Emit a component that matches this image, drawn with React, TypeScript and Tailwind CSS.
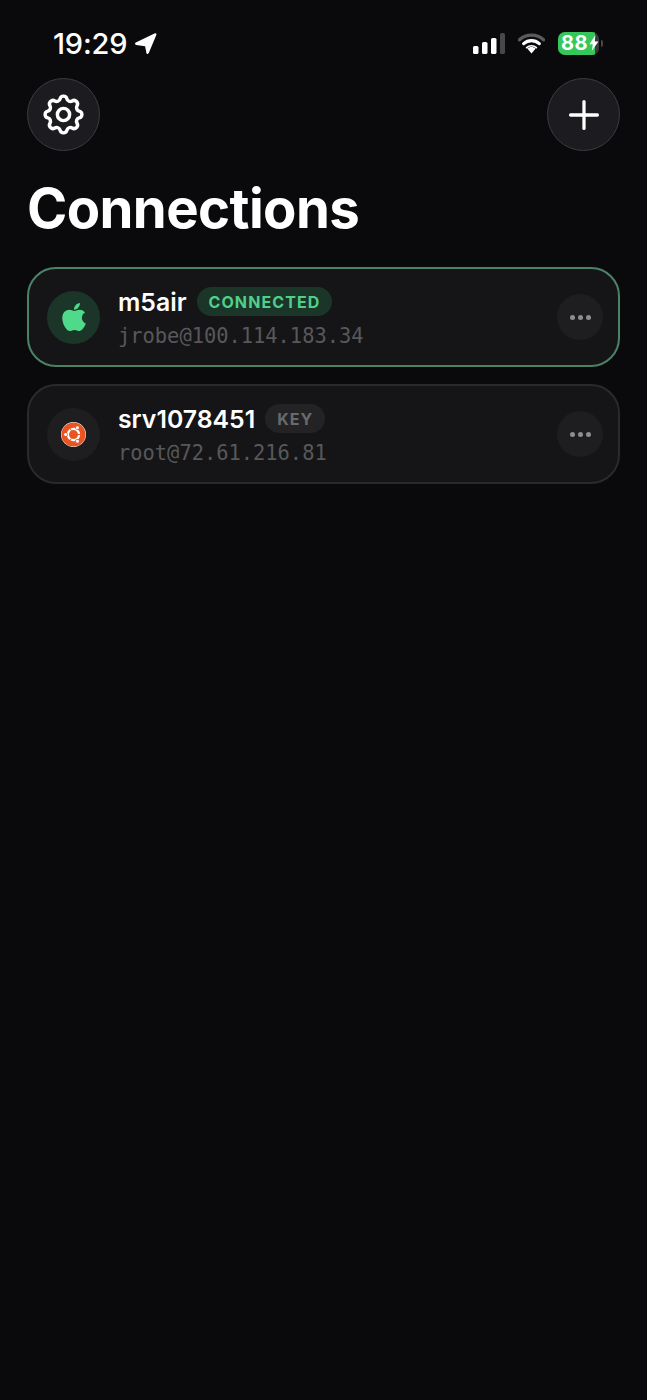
import { Plus } from "lucide-react";
import { FaApple, FaUbuntu } from "react-icons/fa";
import { HiOutlineCog } from "react-icons/hi";

const Dots = () => (
  <div className="flex h-[46px] w-[46px] shrink-0 items-center justify-center gap-[3px] rounded-full bg-[#1e1e20]">
    <span className="h-[5px] w-[5px] rounded-full bg-[#8e8e90]" />
    <span className="h-[5px] w-[5px] rounded-full bg-[#8e8e90]" />
    <span className="h-[5px] w-[5px] rounded-full bg-[#8e8e90]" />
  </div>
);

const StatusBar = () => (
  <div className="flex h-[78px] items-center justify-between pb-[8px] pl-[53px] pr-[44px] pt-[16px]">
    <div className="flex items-center gap-[7px]">
      <span className="text-[29px] font-medium leading-none tracking-[-0.2px] text-white">19:29</span>
      <svg width="23" height="23" viewBox="0 0 23 22" fill="white">
        <path d="M21 .8c1-.4 1.8.5 1.4 1.5L14.8 20.6c-.5 1.2-2.2 1-2.4-.2l-1.3-6.6-8.9-1.4c-1.3-.2-1.6-2-.4-2.5z" />
      </svg>
    </div>
    <div className="flex items-center">
      {/* signal */}
      <svg width="32" height="21" viewBox="0 0 32 21" className="mr-[13px]">
        <rect x="0" y="13" width="5.5" height="8" rx="1.6" fill="white" />
        <rect x="9" y="9" width="5.5" height="12" rx="1.6" fill="white" />
        <rect x="18" y="5" width="5.5" height="16" rx="1.6" fill="white" />
        <rect x="27" y="0" width="5" height="21" rx="1.6" fill="#48484a" />
      </svg>
      {/* wifi */}
      <svg width="27" height="21" viewBox="0 0 27 21" className="mr-[13px]" fill="none">
        <path d="M1.5 6.8C8.3.6 18.7.6 25.5 6.8" stroke="#5a5a5c" strokeWidth="3.4" strokeLinecap="round" />
        <path d="M5.7 10.6c4.5-4 11.1-4 15.6 0" stroke="white" strokeWidth="3.2" strokeLinecap="round" />
        <path d="M13.5 20.5 9.3 15.4c2.4-2 6-2 8.4 0z" fill="white" />
        <path d="M8.6 14.6c2.8-2.5 7-2.5 9.8 0" stroke="white" strokeWidth="1.6" strokeLinecap="round" />
      </svg>
      {/* battery */}
      <div className="flex h-[23px] w-[41px] items-center overflow-hidden rounded-[7px] bg-[#3a3a3c]">
        <div className="flex h-full w-[37px] items-center justify-start bg-[#35c759] pl-[3px]">
          <span className="text-[20px] font-bold leading-none tracking-[0.4px] text-white">88</span>
          <svg width="10" height="16" viewBox="0 0 10 16" fill="white" className="ml-[1px] shrink-0">
            <path d="M6.4 0 0.4 9.2h3.4L2.8 16 9.4 6.4H5.8z" />
          </svg>
        </div>
      </div>
      <div className="ml-[2px] h-[7px] w-[2px] rounded-r-full bg-[#48484a]" />
    </div>
  </div>
);

const CircleButton = ({ children }: { children: React.ReactNode }) => (
  <button className="flex h-[73px] w-[73px] items-center justify-center rounded-full border border-[#3c3c40] bg-[#1c1c20] text-white">
    {children}
  </button>
);

type CardProps = {
  name: string;
  host: string;
  badge: string;
  connected?: boolean;
};

const ConnectionCard = ({ name, host, badge, connected }: CardProps) => (
  <div
    className={
      connected
        ? "flex h-[100px] items-center rounded-[29px] border-2 border-[#4a8367] bg-[#151517] pl-[18px] pr-[15px]"
        : "flex h-[100px] items-center rounded-[29px] border-2 border-[#2a2a2d] bg-[#151517] pl-[18px] pr-[15px]"
    }
  >
    {connected ? (
      <div className="flex h-[53px] w-[53px] shrink-0 items-center justify-center rounded-full bg-[#1c3529]">
        <FaApple className="text-[32px] text-[#4fd98a]" />
      </div>
    ) : (
      <div className="flex h-[53px] w-[53px] shrink-0 items-center justify-center rounded-full bg-[#1e1e20]">
        <span className="rounded-full bg-white">
          <FaUbuntu className="block text-[25px] text-[#e95420]" />
        </span>
      </div>
    )}
    <div className="ml-[18px] min-w-0 flex-1">
      <div className="flex items-center gap-[10px]">
        <span className="text-[24.8px] font-semibold leading-[30px] text-white">{name}</span>
        {connected ? (
          <span className="flex h-[29px] items-center rounded-full bg-[#1c3529] px-[12px] text-[16px] font-bold tracking-[1.1px] text-[#4fd08a]">
            {badge}
          </span>
        ) : (
          <span className="flex h-[29px] items-center rounded-full bg-[#232325] px-[12px] text-[16px] font-bold tracking-[1.1px] text-[#6a6a6c]">
            {badge}
          </span>
        )}
      </div>
      <div className="mt-[7px] font-['DejaVu_Sans_Mono',monospace] text-[20.4px] leading-[24px] text-[#58585a]">
        {host}
      </div>
    </div>
    <Dots />
  </div>
);

export default function App() {
  return (
    <div className="min-h-[1400px] bg-[#0a0a0c] font-['Inter',sans-serif]">
      <StatusBar />
      <div className="flex justify-between pl-[27px] pr-[27px]">
        <CircleButton>
          <HiOutlineCog size={49} style={{ strokeWidth: 1.7 }} />
        </CircleButton>
        <CircleButton>
          <Plus size={46} strokeWidth={1.7} />
        </CircleButton>
      </div>
      <h1 className="mt-[25px] pl-[27px] text-[54.5px] font-bold leading-[64px] tracking-[-0.6px] text-white">
        Connections
      </h1>
      <div className="mt-[27px] flex flex-col gap-[17px] px-[27px]">
        <ConnectionCard name="m5air" host="jrobe@100.114.183.34" badge="CONNECTED" connected />
        <ConnectionCard name="srv1078451" host="root@72.61.216.81" badge="KEY" />
      </div>
    </div>
  );
}
